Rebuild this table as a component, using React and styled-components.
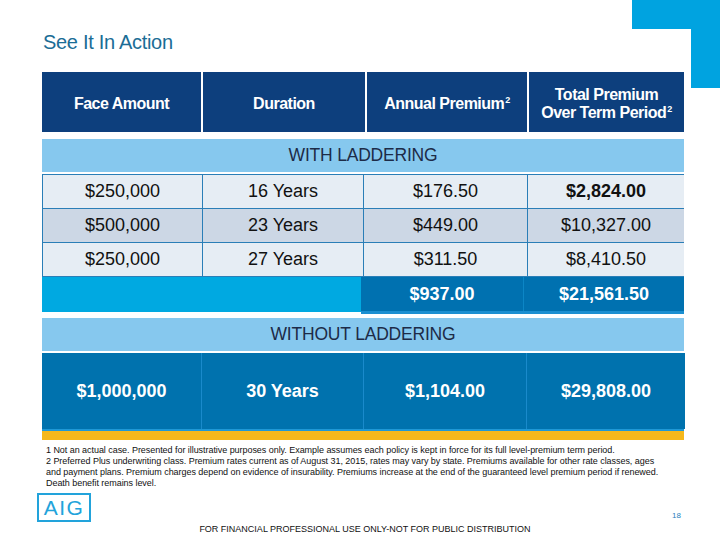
import React from 'react';
import styled, { createGlobalStyle } from 'styled-components';

const GlobalStyle = createGlobalStyle`
  html, body {
    margin: 0;
    padding: 0;
    background: #fff;
  }
  body {
    font-family: 'Liberation Sans', Arial, sans-serif;
  }
`;

const withRows = [
  { face: '$250,000', duration: '16 Years', annual: '$176.50', total: '$2,824.00', bold: true },
  { face: '$500,000', duration: '23 Years', annual: '$449.00', total: '$10,327.00', shade: true },
  { face: '$250,000', duration: '27 Years', annual: '$311.50', total: '$8,410.50' },
];

function App() {
  return (
    <Page>
      <GlobalStyle />
      <Corner width="88" height="88" viewBox="0 0 88 88">
        <rect x="0" y="0" width="88" height="29" fill="#00a3e0" />
        <rect x="59" y="29" width="29" height="59" fill="#00a3e0" />
      </Corner>

      <Title>See It In Action</Title>

      <Table>
        <HeadRow>
          <HeadCell>
            <span>Face Amount</span>
          </HeadCell>
          <HeadCell>
            <span>Duration</span>
          </HeadCell>
          <HeadCell>
            <span>
              Annual Premium<Sup>2</Sup>
            </span>
          </HeadCell>
          <HeadCell>
            <span>
              Total Premium
              <br />
              Over Term Period<Sup>2</Sup>
            </span>
          </HeadCell>
        </HeadRow>

        <Band $top={7}>WITH LADDERING</Band>

        <DataGrid>
          {withRows.map((r, i) => (
            <React.Fragment key={i}>
              <DataCell $shade={r.shade}>{r.face}</DataCell>
              <DataCell $shade={r.shade}>{r.duration}</DataCell>
              <DataCell $shade={r.shade}>{r.annual}</DataCell>
              <DataCell $shade={r.shade} $bold={r.bold}>
                {r.total}
              </DataCell>
            </React.Fragment>
          ))}
        </DataGrid>

        <TotalRow>
          <TotalFill />
          <TotalCells>
            <TotalCell>$937.00</TotalCell>
            <TotalCell>$21,561.50</TotalCell>
          </TotalCells>
        </TotalRow>

        <Band $top={4}>WITHOUT LADDERING</Band>

        <BigRow>
          <BigCell>$1,000,000</BigCell>
          <BigCell>30 Years</BigCell>
          <BigCell>$1,104.00</BigCell>
          <BigCell>$29,808.00</BigCell>
        </BigRow>
        <YellowBar />
      </Table>

      <Notes>
        <NoteLine>
          1 Not an actual case. Presented for illustrative purposes only. Example assumes each policy is kept in force for its full level-premium term period.
        </NoteLine>
        <NoteLine>
          2 Preferred Plus underwriting class. Premium rates current as of August 31, 2015, rates may vary by state. Premiums available for other rate classes, ages
        </NoteLine>
        <NoteLine>
          and payment plans. Premium charges depend on evidence of insurability. Premiums increase at the end of the guaranteed level premium period if renewed.
        </NoteLine>
        <NoteLine>Death benefit remains level.</NoteLine>
      </Notes>

      <Bottom>
        <Logo>AIG</Logo>
        <PageNum>18</PageNum>
      </Bottom>
      <Footer>FOR FINANCIAL PROFESSIONAL USE ONLY-NOT FOR PUBLIC DISTRIBUTION</Footer>
    </Page>
  );
}

const Page = styled.div`
  position: relative;
  width: 720px;
  height: 540px;
  overflow: hidden;
  display: flex;
  flex-direction: column;
  background: #fff;
`;

const Corner = styled.svg`
  position: absolute;
  top: 0;
  right: 0;
`;

const Title = styled.h1`
  margin: 30px 0 0 43px;
  font-family: 'Liberation Sans', Arial, sans-serif;
  font-weight: 400;
  font-size: 20px;
  line-height: 24px;
  color: #1b6d96;
  letter-spacing: -0.3px;
`;

const Table = styled.div`
  margin: 18px 0 0 42px;
  width: 642px;
  display: flex;
  flex-direction: column;
`;

const HeadRow = styled.div`
  display: grid;
  grid-template-columns: 159px 162px 160px 155px;
  gap: 2px;
  height: 60px;
`;

const HeadCell = styled.div`
  background: #0d3f7d;
  color: #fff;
  display: flex;
  align-items: center;
  justify-content: center;
  text-align: center;
  padding-top: 3px;
  font-weight: 700;
  font-size: 16px;
  line-height: 18px;
  letter-spacing: -0.5px;
`;

const Sup = styled.sup`
  font-size: 9px;
  line-height: 0;
  vertical-align: 6px;
  margin-left: 1px;
`;

const Band = styled.div`
  margin-top: ${(p) => p.$top}px;
  height: 33px;
  background: #86c8ee;
  color: #1d2b47;
  display: flex;
  align-items: center;
  justify-content: center;
  font-size: 17.5px;
  letter-spacing: -0.2px;
`;

const DataGrid = styled.div`
  margin-top: 2px;
  display: grid;
  grid-template-columns: 159px 160px 163px 156px;
  grid-auto-rows: 33px;
  gap: 1px;
  padding: 1px;
  background: #2a7eb7;
`;

const DataCell = styled.div`
  background: ${(p) => (p.$shade ? '#ccd7e5' : '#e6edf4')};
  color: #111;
  display: flex;
  align-items: center;
  justify-content: center;
  font-size: 18px;
  font-weight: ${(p) => (p.$bold ? 700 : 400)};
`;

const TotalRow = styled.div`
  display: flex;
  align-items: flex-start;
  height: 37px;
`;

const TotalFill = styled.div`
  width: 319px;
  height: 35px;
  background: #00a9e1;
`;

const TotalCells = styled.div`
  flex: 1;
  height: 34px;
  display: grid;
  grid-template-columns: 162px 1fr;
  gap: 1px;
  background: #0c86c6;
  border-bottom: 3px solid #1b8fd1;
`;

const TotalCell = styled.div`
  background: #0071b0;
  color: #fff;
  display: flex;
  align-items: center;
  justify-content: center;
  font-size: 18px;
  font-weight: 700;
`;

const BigRow = styled.div`
  margin-top: 2px;
  height: 76px;
  display: grid;
  grid-template-columns: 159px 161px 162px 158px;
  gap: 1px;
  background: #1a8acb;
  border-bottom: 2px solid #1f98d6;
`;

const BigCell = styled.div`
  background: #0072ae;
  color: #fff;
  display: flex;
  align-items: center;
  justify-content: center;
  font-size: 18px;
  font-weight: 700;
`;

const YellowBar = styled.div`
  height: 9px;
  background: #f5b81c;
`;

const Notes = styled.div`
  margin: 5px 0 0 46px;
  display: flex;
  flex-direction: column;
`;

const NoteLine = styled.div`
  font-size: 9px;
  line-height: 11px;
  color: #111;
  white-space: nowrap;
  letter-spacing: -0.05px;
`;

const Bottom = styled.div`
  margin: 4px 0 0 37px;
  width: 644px;
  display: flex;
  align-items: flex-end;
  justify-content: space-between;
`;

const Logo = styled.div`
  width: 50px;
  height: 25px;
  border: 2px solid #22a3db;
  color: #22a3db;
  display: flex;
  align-items: center;
  justify-content: center;
  font-size: 21px;
  line-height: 1;
  letter-spacing: 1.5px;
`;

const PageNum = styled.div`
  font-size: 8px;
  color: #2a7fbd;
  margin-bottom: 2px;
`;

const Footer = styled.div`
  margin-top: 2px;
  text-align: center;
  padding-left: 10px;
  font-size: 9px;
  line-height: 11px;
  color: #111;
`;

export default App;
